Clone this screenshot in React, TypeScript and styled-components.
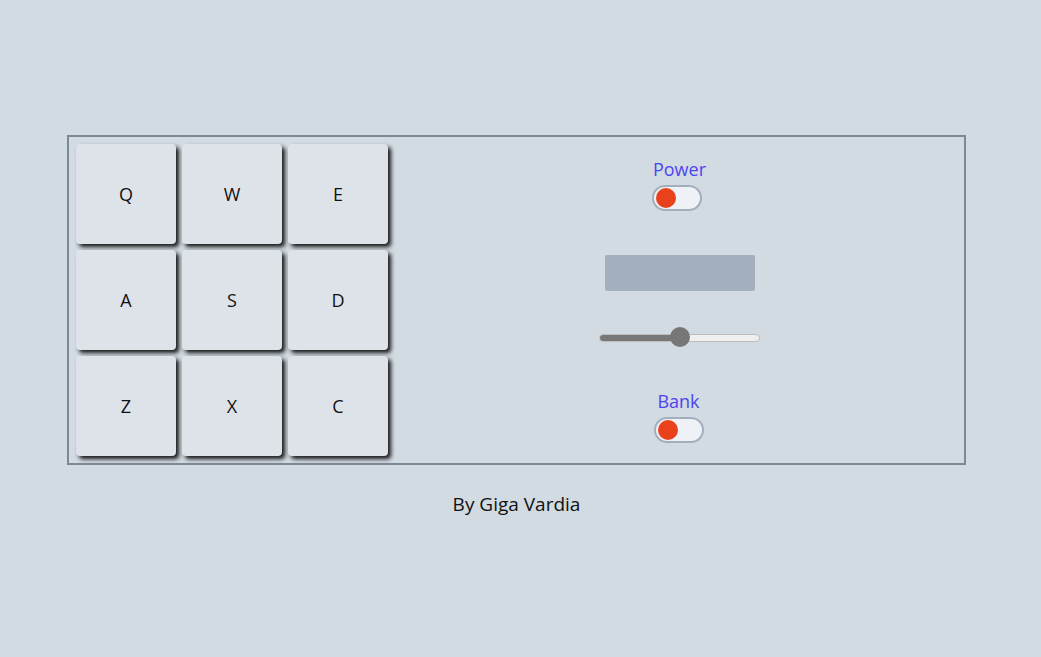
import React from "react";
import styled, { createGlobalStyle } from "styled-components";

const Global = createGlobalStyle`
  html, body { margin: 0; padding: 0; background: #d2dae2; }
  body { font-family: "Open Sans", "Noto Sans", sans-serif; color: #111; }
`;

const Page = styled.div`
  width: 1033px;
  height: 657px;
  display: flex;
  flex-direction: column;
  align-items: center;
  padding-top: 135px;
  box-sizing: border-box;
`;

const Machine = styled.div`
  width: 899px;
  height: 330px;
  box-sizing: border-box;
  border: 2px solid #7c8896;
  padding: 7px;
  display: flex;
`;

const PadGrid = styled.div`
  display: grid;
  grid-template-columns: repeat(3, 100px);
  grid-template-rows: repeat(3, 100px);
  gap: 6px;
`;

const Pad = styled.button`
  width: 100px;
  height: 100px;
  border: none;
  border-radius: 4px;
  background: #dee3ea;
  box-shadow: 3px 3px 4px rgba(0, 0, 0, 0.9);
  font-family: "Open Sans", "Noto Sans", sans-serif;
  font-size: 18px;
  color: #111;
  padding: 0;
  display: flex;
  align-items: center;
  justify-content: center;
`;

const Controls = styled.div`
  flex: 1;
  display: flex;
  flex-direction: column;
  align-items: center;
  padding-left: 14px;
`;

const SwitchGroup = styled.div<{ $top: number; $shift: number }>`
  margin-top: ${(p) => p.$top}px;
  display: flex;
  flex-direction: column;
  align-items: center;
  transform: translateX(${(p) => p.$shift}px);
`;

const Label = styled.div`
  font-size: 18px;
  line-height: 24px;
  margin-bottom: 4px;
  color: #4b45f0;
`;

const Toggle = styled.div<{ $shift: number }>`
  width: 50px;
  height: 26px;
  box-sizing: border-box;
  border: 2px solid #a3aebd;
  border-radius: 13px;
  background: #eef1f5;
  display: flex;
  align-items: center;
  padding-left: 2px;
  margin-left: ${(p) => p.$shift}px;
`;

const Knob = styled.div`
  width: 20px;
  height: 20px;
  border-radius: 50%;
  background: #e8411b;
`;

const Display = styled.div`
  width: 150px;
  height: 36px;
  background: #a3afbd;
  border-radius: 2px;
  margin-top: 44px;
`;

const Slider = styled.div`
  position: relative;
  width: 161px;
  height: 11px;
  margin-top: 41px;
  display: flex;
  align-items: center;
`;

const Track = styled.div`
  width: 100%;
  height: 8px;
  box-sizing: border-box;
  border-radius: 4px;
  border: 1px solid #bdbdbd;
  background: #efefef;
  overflow: hidden;
`;

const Fill = styled.div`
  height: 100%;
  background: #777;
`;

const Thumb = styled.div`
  position: absolute;
  top: -5px;
  width: 20px;
  height: 20px;
  border-radius: 50%;
  background: #777;
`;

const Credit = styled.div`
  margin-top: 26px;
  font-size: 19px;
  color: #111;
`;

const keys = ["Q", "W", "E", "A", "S", "D", "Z", "X", "C"];

export default function App() {
  const vol = 0.5;
  return (
    <>
      <Global />
      <Page>
        <Machine>
          <PadGrid>
            {keys.map((k) => (
              <Pad key={k}>{k}</Pad>
            ))}
          </PadGrid>
          <Controls>
            <SwitchGroup $top={13} $shift={0}>
              <Label>Power</Label>
              <Toggle $shift={-4}>
                <Knob />
              </Toggle>
            </SwitchGroup>
            <Display />
            <Slider>
              <Track>
                <Fill style={{ width: `${vol * 100}%` }} />
              </Track>
              <Thumb style={{ left: `${vol * 161 - 10}px` }} />
            </Slider>
            <SwitchGroup $top={46} $shift={-1}>
              <Label>Bank</Label>
              <Toggle $shift={0}>
                <Knob />
              </Toggle>
            </SwitchGroup>
          </Controls>
        </Machine>
        <Credit>By Giga Vardia</Credit>
      </Page>
    </>
  );
}
